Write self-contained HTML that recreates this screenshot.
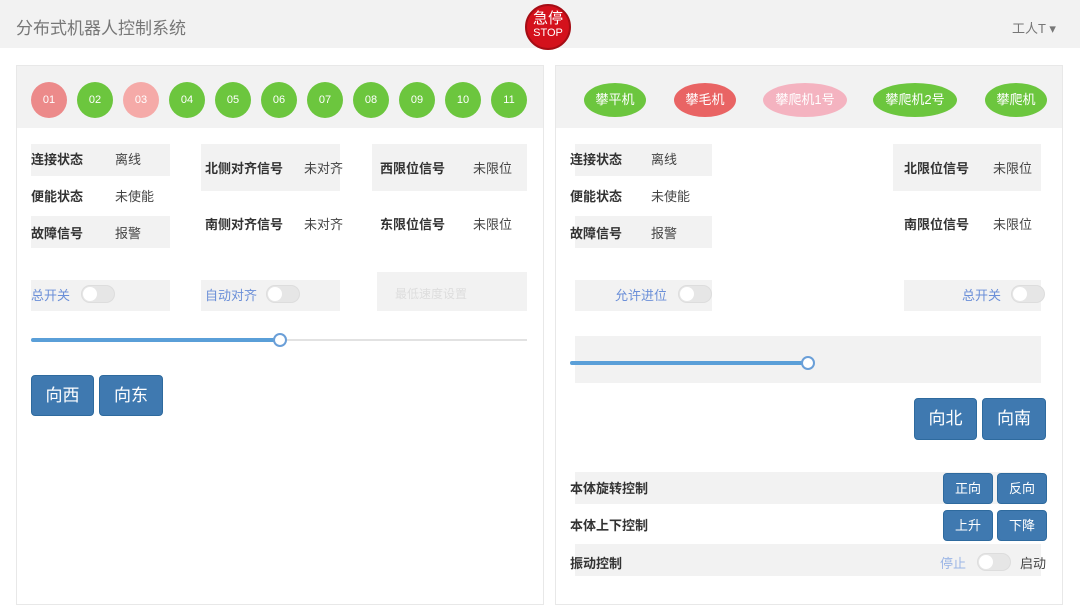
<!DOCTYPE html>
<html><head><meta charset="utf-8"><style>
*{margin:0;padding:0;box-sizing:border-box}
body{width:1080px;height:604px;position:relative;background:#fff;font-family:"Liberation Sans","Noto Sans CJK SC",sans-serif;overflow:hidden;font-size:13px;color:#333}
.a{position:absolute}
.g{position:absolute;background:#f2f2f2}
.c{position:absolute;width:36px;height:36px;border-radius:50%;color:#fff;font-size:11px;text-align:center;line-height:36px;top:82px}
.o{position:absolute;height:34px;border-radius:50%;color:#fff;font-size:13px;text-align:center;line-height:34px;top:83px}
.b{font-weight:bold;position:absolute;margin-top:-2px}
.v{position:absolute;color:#444;margin-top:-2px}
.btn{position:absolute;background:#3f79b0;color:#fff;border-radius:4px;text-align:center;border:1px solid #2e6a9e}
.tg{position:absolute;width:34px;height:18px;border-radius:9px;background:#e6e6e6;border:1px solid #ddd}
.tg:after{content:"";position:absolute;left:1px;top:1px;width:14px;height:14px;border-radius:50%;background:#fff}
.bl{position:absolute;color:#6b8fd8;margin-top:-2px}
</style></head><body>
<div class="a" style="left:0;top:0;width:1080px;height:48px;background:#f2f2f2"></div>
<div class="a" style="left:16px;top:16px;font-size:17px;color:#777;margin-top:-2px">分布式机器人控制系统</div>
<div class="a" style="left:525px;top:4px;width:46px;height:46px;border-radius:50%;background:#d4111c;border:2px solid #a50d15;color:#fff;text-align:center">
<div style="font-size:15px;line-height:17px;margin-top:4px">急停</div><div style="font-size:11px;line-height:13px">STOP</div></div>
<div class="a" style="left:1012px;top:18px;font-size:13px;color:#777">工人T ▾</div>

<!-- left panel -->
<div class="a" style="left:16px;top:65px;width:528px;height:540px;border:1px solid #e8e8e8"></div>
<div class="g" style="left:17px;top:66px;width:526px;height:62px"></div>
<div class="c" style="left:31px;background:#ec8a8a">01</div>
<div class="c" style="left:77px;background:#6cc63e">02</div>
<div class="c" style="left:123px;background:#f5aaa8">03</div>
<div class="c" style="left:169px;background:#6cc63e">04</div>
<div class="c" style="left:215px;background:#6cc63e">05</div>
<div class="c" style="left:261px;background:#6cc63e">06</div>
<div class="c" style="left:307px;background:#6cc63e">07</div>
<div class="c" style="left:353px;background:#6cc63e">08</div>
<div class="c" style="left:399px;background:#6cc63e">09</div>
<div class="c" style="left:445px;background:#6cc63e">10</div>
<div class="c" style="left:491px;background:#6cc63e">11</div>

<div class="g" style="left:31px;top:144px;width:139px;height:32px"></div>
<div class="g" style="left:31px;top:216px;width:139px;height:32px"></div>
<div class="g" style="left:201px;top:144px;width:139px;height:47px"></div>
<div class="g" style="left:372px;top:144px;width:155px;height:47px"></div>
<div class="b" style="left:31px;top:151px">连接状态</div><div class="v" style="left:115px;top:151px">离线</div>
<div class="b" style="left:31px;top:188px">便能状态</div><div class="v" style="left:115px;top:188px">未使能</div>
<div class="b" style="left:31px;top:225px">故障信号</div><div class="v" style="left:115px;top:225px">报警</div>
<div class="b" style="left:205px;top:160px">北侧对齐信号</div><div class="v" style="left:304px;top:160px">未对齐</div>
<div class="b" style="left:205px;top:216px">南侧对齐信号</div><div class="v" style="left:304px;top:216px">未对齐</div>
<div class="b" style="left:380px;top:160px">西限位信号</div><div class="v" style="left:473px;top:160px">未限位</div>
<div class="b" style="left:380px;top:216px">东限位信号</div><div class="v" style="left:473px;top:216px">未限位</div>

<div class="g" style="left:31px;top:280px;width:139px;height:31px"></div>
<div class="bl" style="left:31px;top:287px">总开关</div><div class="tg" style="left:81px;top:285px"></div>
<div class="g" style="left:201px;top:280px;width:139px;height:31px"></div>
<div class="bl" style="left:205px;top:287px">自动对齐</div><div class="tg" style="left:266px;top:285px"></div>
<div class="g" style="left:377px;top:272px;width:150px;height:39px"></div>
<div class="a" style="left:395px;top:285px;color:#ddd;font-size:12px">最低速度设置</div>
<div class="a" style="left:31px;top:338px;width:249px;height:4px;background:#5a9fd8;border-radius:2px"></div>
<div class="a" style="left:280px;top:339px;width:247px;height:2px;background:#e2e2e2"></div>
<div class="a" style="left:273px;top:333px;width:14px;height:14px;border-radius:50%;background:#fff;border:2px solid #6a9fd8"></div>
<div class="btn" style="left:31px;top:375px;width:63px;height:41px;line-height:39px;font-size:17px">向西</div>
<div class="btn" style="left:99px;top:375px;width:64px;height:41px;line-height:39px;font-size:17px">向东</div>

<!-- right panel -->
<div class="a" style="left:555px;top:65px;width:508px;height:540px;border:1px solid #e8e8e8"></div>
<div class="g" style="left:556px;top:66px;width:506px;height:62px"></div>
<div class="o" style="left:584px;width:62px;background:#6cc63e">攀平机</div>
<div class="o" style="left:674px;width:62px;background:#e96464">攀毛机</div>
<div class="o" style="left:763px;width:84px;background:#f4b3c0">攀爬机1号</div>
<div class="o" style="left:873px;width:84px;background:#6cc63e">攀爬机2号</div>
<div class="o" style="left:985px;width:62px;background:#6cc63e">攀爬机</div>

<div class="g" style="left:575px;top:144px;width:137px;height:32px"></div>
<div class="g" style="left:575px;top:216px;width:137px;height:32px"></div>
<div class="g" style="left:893px;top:144px;width:148px;height:47px"></div>
<div class="b" style="left:570px;top:151px">连接状态</div><div class="v" style="left:651px;top:151px">离线</div>
<div class="b" style="left:570px;top:188px">便能状态</div><div class="v" style="left:651px;top:188px">未使能</div>
<div class="b" style="left:570px;top:225px">故障信号</div><div class="v" style="left:651px;top:225px">报警</div>
<div class="b" style="left:904px;top:160px">北限位信号</div><div class="v" style="left:993px;top:160px">未限位</div>
<div class="b" style="left:904px;top:216px">南限位信号</div><div class="v" style="left:993px;top:216px">未限位</div>

<div class="g" style="left:575px;top:280px;width:137px;height:31px"></div>
<div class="bl" style="left:615px;top:287px">允许进位</div><div class="tg" style="left:678px;top:285px"></div>
<div class="g" style="left:904px;top:280px;width:137px;height:31px"></div>
<div class="bl" style="left:962px;top:287px">总开关</div><div class="tg" style="left:1011px;top:285px"></div>
<div class="g" style="left:575px;top:336px;width:466px;height:47px"></div>
<div class="a" style="left:570px;top:361px;width:238px;height:4px;background:#5a9fd8;border-radius:2px"></div>
<div class="a" style="left:801px;top:356px;width:14px;height:14px;border-radius:50%;background:#fff;border:2px solid #6a9fd8"></div>
<div class="btn" style="left:914px;top:398px;width:63px;height:42px;line-height:40px;font-size:17px">向北</div>
<div class="btn" style="left:982px;top:398px;width:64px;height:42px;line-height:40px;font-size:17px">向南</div>

<div class="g" style="left:575px;top:472px;width:466px;height:32px"></div>
<div class="g" style="left:575px;top:544px;width:466px;height:32px"></div>
<div class="b" style="left:570px;top:480px">本体旋转控制</div>
<div class="b" style="left:570px;top:517px">本体上下控制</div>
<div class="b" style="left:570px;top:555px">振动控制</div>
<div class="btn" style="left:943px;top:473px;width:50px;height:31px;line-height:29px">正向</div>
<div class="btn" style="left:997px;top:473px;width:50px;height:31px;line-height:29px">反向</div>
<div class="btn" style="left:943px;top:510px;width:50px;height:31px;line-height:29px">上升</div>
<div class="btn" style="left:997px;top:510px;width:50px;height:31px;line-height:29px">下降</div>
<div class="bl" style="left:940px;top:555px;color:#9bb5e6">停止</div>
<div class="tg" style="left:977px;top:553px"></div>
<div class="v" style="left:1020px;top:555px">启动</div>
</body></html>
